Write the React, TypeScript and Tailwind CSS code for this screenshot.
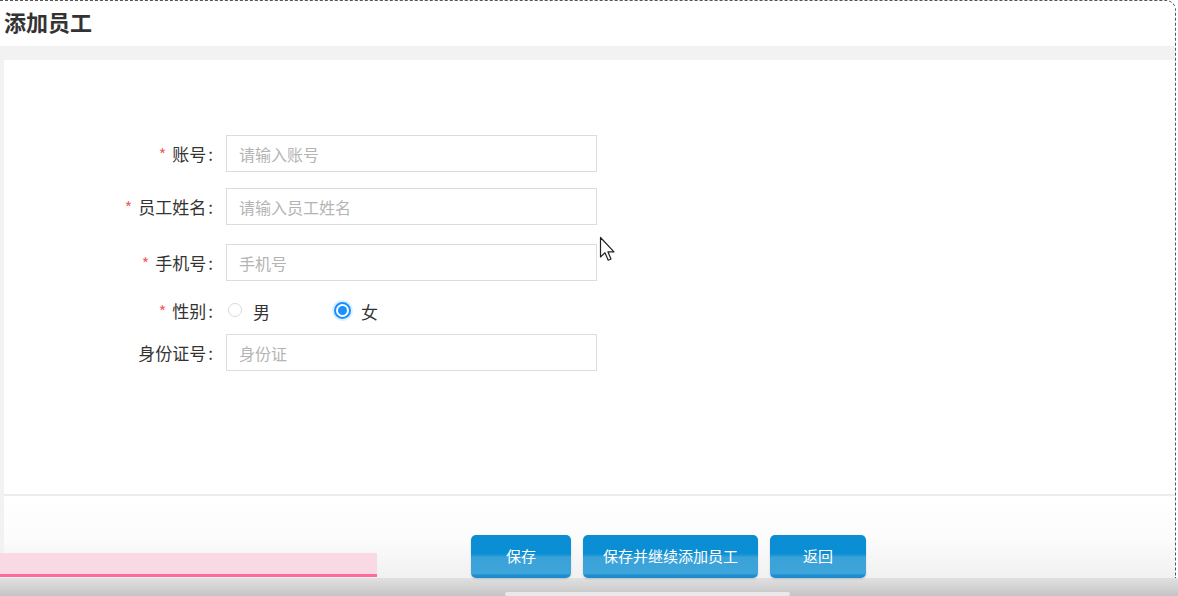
import React from 'react';

const font = { fontFamily: '"Noto Sans CJK SC", "Liberation Sans", sans-serif' };

interface FieldProps {
  label: string;
  required?: boolean;
  placeholder: string;
  className?: string;
}

const Label: React.FC<{ label: string; required?: boolean }> = ({ label, required }) => (
  <div className="w-[209px] shrink-0 text-right text-[17px] leading-none text-[#333]">
    {required && <span className="mr-[6px] text-[16px] text-[#f0605a]">*</span>}
    {label}
    <span className="ml-[2px]">:</span>
  </div>
);

const Field: React.FC<FieldProps> = ({ label, required, placeholder, className }) => (
  <div className={`flex items-center ${className ?? ''}`}>
    <Label label={label} required={required} />
    <input
      placeholder={placeholder}
      className="ml-[13px] h-[37px] w-[371px] border border-[#dcdcdc] bg-white px-[12px] text-[16px] outline-none placeholder:text-[#b4b4b4]"
      style={font}
    />
  </div>
);

const BlueButton: React.FC<{ label: string; width: string }> = ({ label, width }) => (
  <button
    className={`${width} h-[43px] rounded-[5px] bg-[linear-gradient(180deg,#0a8dd2_0%,#0b8fd4_44%,#3aa2d8_52%,#3ea5da_90%,#1f8fd3_93%,#1a8ad0_100%)] text-[15px] text-white shadow-[0_1px_2px_rgba(0,0,0,0.15)]`}
  >
    {label}
  </button>
);

export default function App() {
  return (
    <div className="relative h-[596px] w-[1178px] overflow-hidden bg-white" style={font}>
      <div className="flex h-[578px] w-[1176px] flex-col rounded-tr-[10px] border-t border-r border-dashed border-[#555]">
        <div className="h-[45px] shrink-0 pl-[4px] pt-[7px]">
          <h1 className="text-[22px] font-bold leading-[26px] text-[#333]">添加员工</h1>
        </div>
        <div className="h-[14px] shrink-0 bg-[#f2f2f2]" />
        <div className="flex flex-1 flex-col bg-[#f2f2f2] pl-[4px]">
          <div className="h-[436px] shrink-0 border-b-2 border-[#ececec] bg-white pt-[75px]">
            <Field label="账号" required placeholder="请输入账号" />
            <Field label="员工姓名" required placeholder="请输入员工姓名" className="mt-[16px]" />
            <Field label="手机号" required placeholder="手机号" className="mt-[19px]" />
            <div className="mt-[18px] flex h-[22px] items-center">
              <Label label="性别" required />
              <label className="ml-[15px] flex items-center">
                <span className="h-[14px] w-[14px] rounded-full border border-[#d9d9d9] bg-white" />
                <span className="ml-[11px] mt-[3px] text-[17px] text-[#333]">男</span>
              </label>
              <label className="ml-[64px] flex items-center">
                <span className="flex h-[17px] w-[17px] items-center justify-center rounded-full border-[2px] border-[#1890ff] bg-white shadow-[0_0_0_2px_rgba(24,144,255,0.15)]">
                  <span className="h-[9px] w-[9px] rounded-full bg-[#1890ff]" />
                </span>
                <span className="ml-[10px] mt-[3px] text-[17px] text-[#333]">女</span>
              </label>
            </div>
            <Field label="身份证号" placeholder="身份证" className="mt-[13px]" />
          </div>
          <div className="flex flex-1 items-end justify-center bg-[linear-gradient(180deg,#ffffff_0%,#fcfcfc_50%,#f1f1f1_100%)] pl-[158px]">
            <div className="flex gap-[12px]">
              <BlueButton label="保存" width="w-[100px]" />
              <BlueButton label="保存并继续添加员工" width="w-[175px]" />
              <BlueButton label="返回" width="w-[96px]" />
            </div>
          </div>
        </div>
      </div>
      <div className="h-[18px] w-full bg-[linear-gradient(180deg,#e0e0e0_0%,#d0d0d0_60%,#c4c4c4_100%)]" />

      {/* video progress overlay */}
      <div className="absolute left-0 top-[553px] h-[24px] w-[377px] border-b-[3px] border-[#ff6b99] bg-[#f9d9e3]" />
      <div className="absolute left-[505px] top-[592px] h-[4px] w-[285px] rounded-full bg-[#e9e9e9]" />

      {/* mouse cursor */}
      <svg className="absolute left-[599px] top-[236px]" width="18" height="28" viewBox="0 0 18 28">
        <path
          d="M1.5 1.5 L1.5 21 L6 16.8 L9.2 24.2 L12 23 L8.9 15.8 L15 15.8 Z"
          fill="#fff"
          stroke="#222"
          strokeWidth="1.2"
          strokeLinejoin="round"
        />
      </svg>
    </div>
  );
}
